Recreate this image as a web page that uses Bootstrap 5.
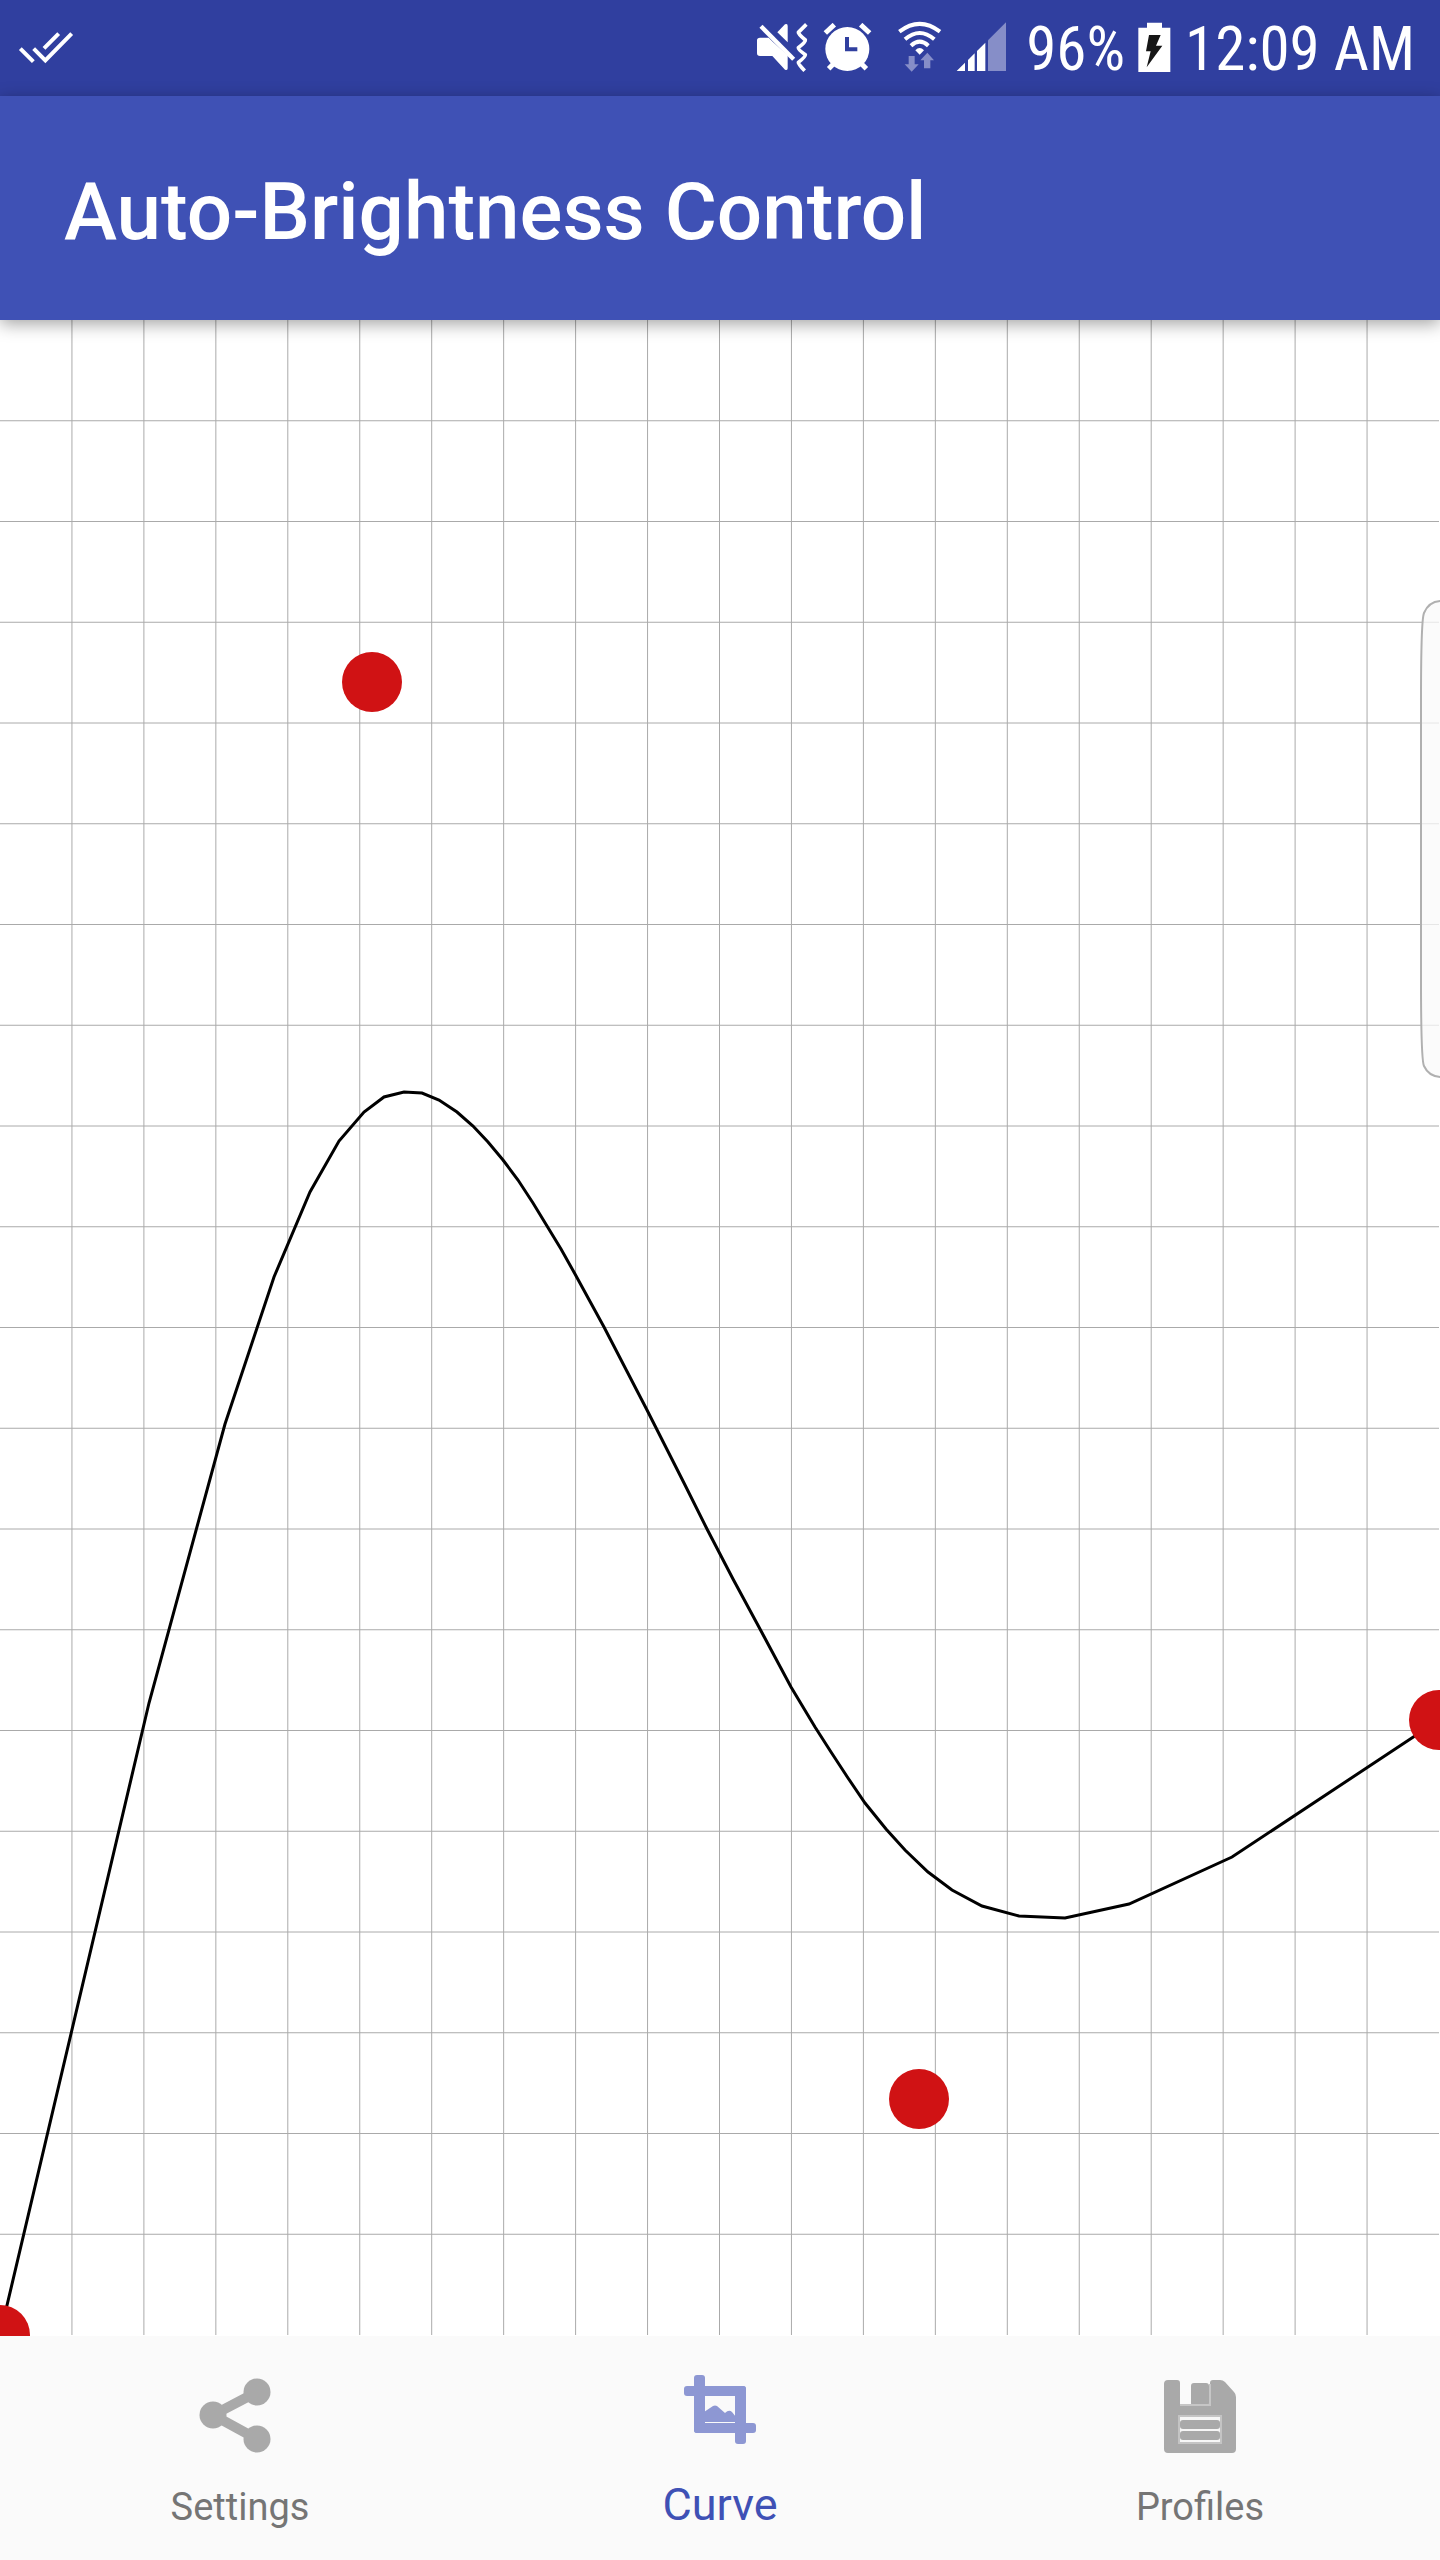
<!DOCTYPE html>
<html lang="en">
<head>
<meta charset="utf-8">
<meta name="viewport" content="width=device-width, initial-scale=1">
<title>Auto-Brightness Control</title>
<link href="https://cdn.jsdelivr.net/npm/bootstrap@5.3.0/dist/css/bootstrap.min.css" rel="stylesheet">
<style>
body { font-family: Roboto, "Noto Sans", sans-serif; background: #fff; }
.status-bar { background: #303f9f; height: 96px; padding: 0 25px 0 16px; }
.status-bar svg { height: 50px; display: block; flex: none; }
.status-text { font-family: "Roboto Condensed", "Liberation Sans Narrow", Roboto, sans-serif; font-size: 61px; line-height: 72px; padding-top: 2px; color: #fff; white-space: nowrap; }
.app-header { background: #3f51b5; height: 224px; padding: 8px 64px 0; z-index: 2; box-shadow: 0 4px 16px rgba(0,0,0,.36); }
.app-title { font-size: 80px; line-height: 96px; font-weight: 500; color: #fff; white-space: nowrap; }
.curve-area { min-height: 0; background: #fff; }
.curve-area svg { width: 100%; height: 100%; display: block; }
.tab-bar { background: #fafafa; height: 224px; }
.tab-item { flex: 1 1 0; color: #757575; font-size: 38px; line-height: 48px; padding: 32px 0 29px; text-decoration: none; }
.tab-item.active { color: #3f51b5; font-size: 45px; padding: 24px 0 31px; }
.tab-item svg { width: 96px; height: 96px; display: block; }
</style>
<script src="https://cdn.jsdelivr.net/npm/bootstrap@5.3.0/dist/js/bootstrap.bundle.min.js"></script>
</head>
<body>
<div class="vh-100 d-flex flex-column overflow-hidden">
  <div class="status-bar d-flex align-items-center flex-shrink-0">
    <svg class="me-auto" width="62" viewBox="48 69 186 150" fill="none" stroke="#fff" stroke-width="12" aria-hidden="true">
      <path d="M61 146 L100 185 M132 145 L176 101 M101 146 L136 181 L215 101"/>
    </svg>
    <svg width="62" viewBox="48 69 186 150" aria-label="Sound off" role="img">
      <path fill="#fff" d="M66 113 H92 L104 125 L149 166 V205 Q149 213 141 209 L103 168 H66 Q57 168 57 160 V121 Q57 113 66 113Z"/>
      <path fill="#fff" d="M118 97 L141 73 Q149 69 149 78 V127Z"/>
      <path stroke="#303f9f" stroke-width="12" d="M78 70 L182 174"/>
      <path stroke="#fff" stroke-width="13" d="M69 79 L167 178"/>
      <path fill="none" stroke="#fff" stroke-width="11" stroke-linejoin="round" d="M205 73 L181 97 Q180 101 202 120 Q203 126 181 143 Q180 149 202 164 Q203 170 181 187 Q180 191 200 212"/>
    </svg>
    <svg width="68" viewBox="234 69 204 150" aria-label="Alarm" role="img">
      <circle cx="328" cy="147" r="66" fill="#fff"/>
      <path stroke="#fff" stroke-width="15" d="M262 99 L289 74 M395 99 L368 74 M272 206 L292 186 M385 206 L365 186"/>
      <path fill="none" stroke="#303f9f" stroke-width="12" d="M327 111 V148 H358"/>
    </svg>
    <svg width="64" viewBox="438 69 192 150" overflow="visible" aria-label="Wi-Fi" role="img">
      <g fill="none" stroke="#fff" stroke-width="12">
        <path d="M484 95 Q545 48 606 95"/><path d="M501 118 Q545 80 589 118"/><path d="M519 137 Q545 113 571 137"/>
      </g>
      <path fill="#fff" d="M532 151 Q545 137 558 151 L545 164Z"/>
      <path fill="#868ec8" d="M512 168 H530 V193 H542 L521 215 L500 193 H512Z M568 158 L588 181 H577 V205 H558 V181 H547Z"/>
    </svg>
    <svg width="78" viewBox="630 69 234 150" overflow="visible" aria-label="Signal" role="img">
      <path fill="#fff" d="M656 213 L681 188 V213Z M690 213 V180 L710 160 V213Z M717 213 V153 L742 128 V213Z"/>
      <path fill="#868ec8" d="M750 213 V121 L804 67 V213Z"/>
    </svg>
    <span class="status-text">96%</span>
    <svg width="60" viewBox="104 69 180 150" overflow="visible" aria-label="Charging" role="img">
      <path fill="#fff" d="M144 83 H170 V68 H215 V83 H240 V216 H144Z"/>
      <path fill="#161616" d="M176 105 H211 L197 137 H216 L169 202 L181 154 H167Z"/>
    </svg>
    <span class="status-text">12:09 AM</span>
  </div>
  <header class="app-header d-flex align-items-center flex-shrink-0 position-relative">
    <h1 class="app-title m-0">Auto-Brightness Control</h1>
  </header>
  <main class="curve-area flex-fill">
    <svg viewBox="0 320 1440 2016" preserveAspectRatio="none" role="img" aria-label="Brightness curve">
      <g id="grid" stroke="#aaa" stroke-width="1"></g>
      <polyline fill="none" stroke="#000" stroke-width="3" points="0,2335 149,1703 225,1424 274,1277 310,1192 339,1141 364,1112 384,1097 404,1092 422,1093 439,1100 457,1112 473,1126 488,1142 503,1160 518,1180 533,1203 547,1226 561,1249 575,1274 604,1327 647,1410 684,1483 707,1529 733,1579 760,1629 791,1687 815,1727 831,1752 848,1778 865,1803 886,1829 905,1850 928,1872 952,1890 982,1906 1019,1916 1065,1918 1129,1904 1232,1857 1439,1720"/>
      <g fill="#d01214"><circle cx="0" cy="2335" r="30"/><circle cx="372" cy="682" r="30"/><circle cx="919" cy="2099" r="30"/><circle cx="1439" cy="1720" r="30"/></g>
      <path fill="#fafafa" fill-opacity=".75" stroke="#b0b0b0" stroke-width="2" d="M1442 601 Q1429 601 1424 613 Q1421 620 1421 700 V980 Q1421 1060 1424 1066 Q1429 1077 1442 1077"/>
    </svg>
  </main>
  <nav class="tab-bar d-flex flex-shrink-0" aria-label="Sections">
    <a href="#settings" class="tab-item d-flex flex-column align-items-center justify-content-between">
      <svg viewBox="0 0 96 96" fill="#a9a9a9" aria-hidden="true">
        <path fill="none" stroke="#a9a9a9" stroke-width="10" d="M65 24 L21 47 L65 71"/>
        <circle cx="21" cy="47" r="13.5"/><circle cx="65" cy="24" r="13.5"/><circle cx="65" cy="71" r="13.5"/>
      </svg>
      <span>Settings</span>
    </a>
    <a href="#curve" class="tab-item active d-flex flex-column align-items-center justify-content-between" aria-current="page">
      <svg viewBox="0 0 96 96" fill="#8d97d3" aria-hidden="true">
        <rect x="22" y="15" width="11" height="58" rx="3"/><rect x="12" y="26" width="62" height="10" rx="3"/>
        <rect x="63" y="26" width="11" height="58" rx="3"/><rect x="22" y="63" width="62" height="10" rx="3"/>
        <path d="M32 62 V52 L41 46 Q43 45 45 46 L53 53 Q57 49 60 52 L64 57 V62Z"/>
      </svg>
      <span>Curve</span>
    </a>
    <a href="#profiles" class="tab-item d-flex flex-column align-items-center justify-content-between">
      <svg viewBox="0 0 96 96" aria-hidden="true">
        <path fill="#a9a9a9" d="M16 12 H25 Q28 12 28 15 V37 H58 V15 Q58 12 61 12 H68 Q71 12 73 14 L82 24 Q84 26 84 29 V81 Q84 85 80 85 H16 Q12 85 12 81 V16 Q12 12 16 12Z"/>
        <rect x="39" y="15" width="18" height="23" rx="3" fill="#a9a9a9"/><path stroke="#c6c6c6" stroke-width="2" d="M58 16 V37 H28" fill="none"/>
        <rect x="27" y="48" width="42" height="27" fill="#f6f6f6" stroke="#c4c4c4" stroke-width="2"/>
        <rect x="28" y="52" width="40" height="9" rx="3" fill="#a9a9a9"/><rect x="28" y="63" width="40" height="9" rx="3" fill="#a9a9a9"/>
      </svg>
      <span>Profiles</span>
    </a>
  </nav>
</div>
<script>
  // 20 x 20 grid over the plot area
  let d = '';
  for (let i = 1; i < 20; i++) {
    const x = i * 1439 / 20, y = 320 + i * 2015 / 20;
    d += `<path d="M${x} 320V2335M0 ${y}H1439"/>`;
  }
  document.getElementById('grid').innerHTML = d;
</script>
</body>
</html>
